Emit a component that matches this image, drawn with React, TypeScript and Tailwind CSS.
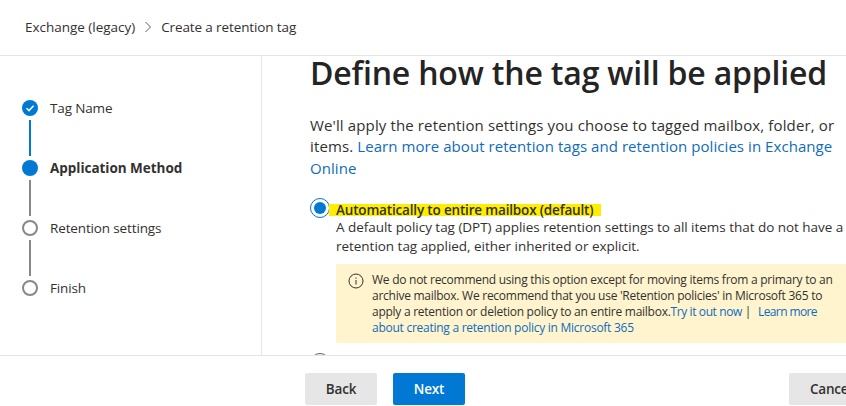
const font = { fontFamily: '"Open Sans", "Noto Sans", sans-serif' };

function Step({ label, state, last }: { label: string; state: "done" | "current" | "todo"; last?: boolean }) {
  return (
    <div className="flex h-[60px] gap-[12px]">
      <div className="flex w-[16px] flex-col items-center">
        {state === "done" && (
          <svg width="16" height="16" viewBox="0 0 16 16" className="shrink-0">
            <circle cx="8" cy="8" r="8" fill="#0078d4" />
            <path d="M4.5 8.3 L7 10.6 L11.6 5.8" fill="none" stroke="white" strokeWidth="1.5" />
          </svg>
        )}
        {state === "current" && <div className="h-[16px] w-[16px] shrink-0 rounded-full bg-[#0078d4]" />}
        {state === "todo" && <div className="h-[16px] w-[16px] shrink-0 rounded-full border-2 border-[#8a8886] bg-white" />}
        {!last && (
          <div className={`mt-[4px] h-[36px] w-[2px] ${state === "done" ? "bg-[#0078d4]" : "bg-[#8a8886]"}`} />
        )}
      </div>
      <div
        className={`h-[16px] text-[13.5px] leading-[16px] text-[#323130] ${
          state === "current" ? "font-bold tracking-[-0.03px]" : "tracking-[-0.14px]"
        }`}
      >
        {label}
      </div>
    </div>
  );
}

export default function App() {
  return (
    <div className="flex h-[406px] w-[846px] flex-col overflow-hidden bg-white text-[#323130]" style={font}>
      <header className="flex h-[56px] shrink-0 items-center gap-[8px] border-b border-[#e5e5e5] pb-[1px] pl-[25px] text-[13.5px]">
        <span className="tracking-[-0.02px]">Exchange (legacy)</span>
        <svg width="10" height="12" viewBox="0 0 10 12">
          <path d="M2.5 1 L7.5 6 L2.5 11" fill="none" stroke="#605e5c" strokeWidth="1" />
        </svg>
        <span className="tracking-[-0.12px]">Create a retention tag</span>
      </header>

      <div className="flex h-[299px] shrink-0">
        <nav className="h-full w-[262px] shrink-0 border-r border-[#e5e5e5] pt-[44px] pl-[22px]">
          <Step label="Tag Name" state="done" />
          <Step label="Application Method" state="current" />
          <Step label="Retention settings" state="todo" />
          <Step label="Finish" state="todo" last />
        </nav>

        <main className="min-w-0 flex-1 overflow-hidden pl-[48px]">
          <h1 className="mt-[-3px] text-[32px] leading-[40px] font-semibold tracking-[-0.18px] whitespace-nowrap text-[#242424]">
            Define how the tag will be applied
          </h1>
          <p className="mt-[22px] w-[535px] text-[15px] leading-[21.33px] tracking-[0.13px] text-[#323130]">
            We'll apply the retention settings you choose to tagged mailbox, folder, or items.{" "}
            <span className="tracking-[0.06px] text-[#0f6cbd]">
              Learn more about retention tags and retention policies in Exchange Online
            </span>
          </p>

          <div className="mt-[19px] flex">
            <div className="flex h-[20px] w-[20px] shrink-0 items-center justify-center rounded-full border-[1.5px] border-[#0078d4]">
              <div className="h-[12px] w-[12px] rounded-full bg-[#0078d4]" />
            </div>
            <div className="min-w-0 flex-1">
              <div className="mt-[6px] ml-[-1px] h-[12px] w-[272px] bg-[#ffee00] pl-[7px] text-[13.5px] leading-[12px] font-semibold tracking-[-0.17px] whitespace-nowrap">
                Automatically to entire mailbox (default)
              </div>
              <div className="mt-[2px] ml-[6px] text-[13.5px] leading-[19.5px] tracking-[-0.03px] whitespace-nowrap">
                A default policy tag (DPT) applies retention settings to all items that do not have a
                <br />
                retention tag applied, either inherited or explicit.
              </div>
              <div className="mt-[7px] ml-[6px] flex h-[79px] w-[520px] gap-[8px] bg-[#fff4ce] pt-[8px] pl-[12px]">
                <svg width="16" height="16" viewBox="0 0 16 16" className="mt-[1px] shrink-0">
                  <circle cx="8" cy="8" r="7" fill="none" stroke="#323130" strokeWidth="1" />
                  <rect x="7.5" y="7" width="1" height="4.5" fill="#323130" />
                  <rect x="7.5" y="4.5" width="1" height="1.2" fill="#323130" />
                </svg>
                <p className="text-[12px] leading-[16px] tracking-[-0.26px] whitespace-nowrap">
                  We do not recommend using this option except for moving items from a primary to an
                  <br />
                  archive mailbox. We recommend that you use 'Retention policies' in Microsoft 365 to
                  <br />
                  apply a retention or deletion policy to an entire mailbox.
                  <span className="tracking-[-0.4px] text-[#0f6cbd]">Try it out now</span> |{" "}
                  <span className="ml-[4px] tracking-[-0.6px] text-[#0f6cbd]">Learn more</span>
                  <br />
                  <span className="text-[#0f6cbd]">about creating a retention policy in Microsoft 365</span>
                </p>
              </div>
              <div className="mt-[10px] ml-[-20px] h-[20px] w-[20px] rounded-full border-[1.5px] border-[#605e5c]" />
            </div>
          </div>
        </main>
      </div>

      <footer className="flex h-[51px] shrink-0 items-start border-t border-[#e5e5e5] pt-[17px] pl-[305px] text-[13.5px] font-semibold tracking-[-0.2px]">
        <button className="h-[32px] w-[72px] shrink-0 rounded-[2px] bg-[#e6e6e6] text-[#323130]">Back</button>
        <button className="ml-[16px] h-[32px] w-[72px] shrink-0 rounded-[2px] bg-[#0078d4] text-white">Next</button>
        <button className="ml-[324px] h-[32px] w-[84px] shrink-0 rounded-[2px] bg-[#e6e6e6] text-[#323130]">Cancel</button>
      </footer>
    </div>
  );
}
